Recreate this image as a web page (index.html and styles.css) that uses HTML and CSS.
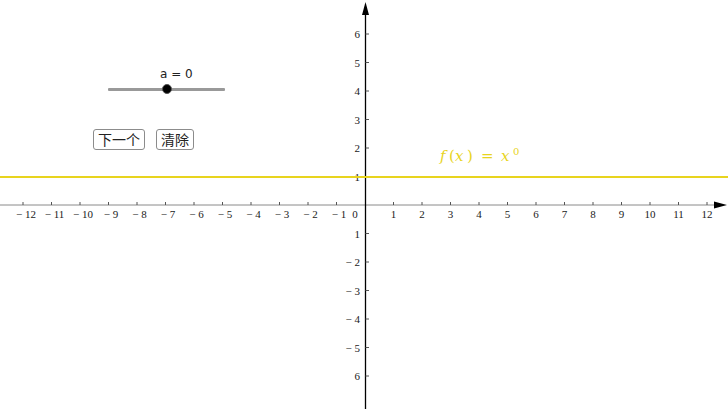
FILE: index.html
```html
<!DOCTYPE html>
<html>
<head>
<meta charset="utf-8">
<link rel="stylesheet" href="styles.css">
</head>
<body>
<div class="stage">
  <svg class="graph" width="728" height="409" viewBox="0 0 728 409" xmlns="http://www.w3.org/2000/svg">
    <!-- x axis -->
    <line class="xaxis" x1="0" y1="205" x2="716" y2="205"/>
    <polygon class="arrow" points="727,205 714,201.5 714,208.5"/>
    <!-- y axis -->
    <line class="yaxis" x1="365.5" y1="409" x2="365.5" y2="12"/>
    <polygon class="arrow" points="365.5,2 362,15 369,15"/>
    <!-- x ticks -->
    <g class="ticks">
      <line x1="23" y1="202" x2="23" y2="205"/>
      <line x1="51.5" y1="202" x2="51.5" y2="205"/>
      <line x1="80" y1="202" x2="80" y2="205"/>
      <line x1="108.5" y1="202" x2="108.5" y2="205"/>
      <line x1="137" y1="202" x2="137" y2="205"/>
      <line x1="165.5" y1="202" x2="165.5" y2="205"/>
      <line x1="194" y1="202" x2="194" y2="205"/>
      <line x1="222.5" y1="202" x2="222.5" y2="205"/>
      <line x1="251" y1="202" x2="251" y2="205"/>
      <line x1="279.5" y1="202" x2="279.5" y2="205"/>
      <line x1="308" y1="202" x2="308" y2="205"/>
      <line x1="336.5" y1="202" x2="336.5" y2="205"/>
      <line x1="393.5" y1="202" x2="393.5" y2="205"/>
      <line x1="422" y1="202" x2="422" y2="205"/>
      <line x1="450.5" y1="202" x2="450.5" y2="205"/>
      <line x1="479" y1="202" x2="479" y2="205"/>
      <line x1="507.5" y1="202" x2="507.5" y2="205"/>
      <line x1="536" y1="202" x2="536" y2="205"/>
      <line x1="564.5" y1="202" x2="564.5" y2="205"/>
      <line x1="593" y1="202" x2="593" y2="205"/>
      <line x1="621.5" y1="202" x2="621.5" y2="205"/>
      <line x1="650" y1="202" x2="650" y2="205"/>
      <line x1="678.5" y1="202" x2="678.5" y2="205"/>
      <line x1="707" y1="202" x2="707" y2="205"/>
      <!-- y ticks -->
      <line x1="365.5" y1="34" x2="369" y2="34"/>
      <line x1="365.5" y1="62.5" x2="369" y2="62.5"/>
      <line x1="365.5" y1="91" x2="369" y2="91"/>
      <line x1="365.5" y1="119.5" x2="369" y2="119.5"/>
      <line x1="365.5" y1="148" x2="369" y2="148"/>
      <line x1="365.5" y1="176.5" x2="369" y2="176.5"/>
      <line x1="365.5" y1="233.5" x2="369" y2="233.5"/>
      <line x1="365.5" y1="262" x2="369" y2="262"/>
      <line x1="365.5" y1="290.5" x2="369" y2="290.5"/>
      <line x1="365.5" y1="319" x2="369" y2="319"/>
      <line x1="365.5" y1="347.5" x2="369" y2="347.5"/>
      <line x1="365.5" y1="376" x2="369" y2="376"/>
    </g>
    <!-- x labels -->
    <g class="xlabels">
      <text x="26" y="218">− 12</text>
      <text x="54.5" y="218">− 11</text>
      <text x="83" y="218">− 10</text>
      <text x="111" y="218">− 9</text>
      <text x="139.5" y="218">− 8</text>
      <text x="168" y="218">− 7</text>
      <text x="196.5" y="218">− 6</text>
      <text x="225" y="218">− 5</text>
      <text x="253.5" y="218">− 4</text>
      <text x="282" y="218">− 3</text>
      <text x="310.5" y="218">− 2</text>
      <text x="339" y="218">− 1</text>
      <text x="355" y="218">0</text>
      <text x="393.5" y="218">1</text>
      <text x="422" y="218">2</text>
      <text x="450.5" y="218">3</text>
      <text x="479" y="218">4</text>
      <text x="507.5" y="218">5</text>
      <text x="536" y="218">6</text>
      <text x="564.5" y="218">7</text>
      <text x="593" y="218">8</text>
      <text x="621.5" y="218">9</text>
      <text x="650" y="218">10</text>
      <text x="678.5" y="218">11</text>
      <text x="707" y="218">12</text>
    </g>
    <!-- y labels -->
    <g class="ylabels">
      <text x="360" y="38">6</text>
      <text x="360" y="66.5">5</text>
      <text x="360" y="95">4</text>
      <text x="360" y="123.5">3</text>
      <text x="360" y="152">2</text>
      <text x="360" y="180.5">1</text>
      <text x="360" y="237.5">1</text>
      <text x="360" y="266">− 2</text>
      <text x="360" y="294.5">− 3</text>
      <text x="360" y="323">− 4</text>
      <text x="360" y="351.5">− 5</text>
      <text x="360" y="380">6</text>
    </g>
    <!-- function -->
    <line class="fline" x1="0" y1="177" x2="728" y2="177"/>
    <g class="flabel">
      <text class="it" x="440" y="161">f</text>
      <text x="449" y="161">(</text>
      <text class="it" x="455" y="161">x</text>
      <text x="467" y="161">)</text>
      <text x="481" y="161">=</text>
      <text class="it" x="501" y="161">x</text>
      <text class="sup" x="513" y="155">0</text>
    </g>
  </svg>

  <div class="slider">
    <div class="slider-label">a = 0</div>
    <div class="slider-track"></div>
    <div class="slider-knob"></div>
  </div>

  <div class="buttons">
    <button class="btn">下一个</button>
    <button class="btn">清除</button>
  </div>
</div>
</body>
</html>
```

FILE: styles.css
```css
html, body {
  margin: 0;
  padding: 0;
  background: #ffffff;
}

.stage {
  position: relative;
  width: 728px;
  height: 409px;
  overflow: hidden;
  background: #ffffff;
}

.graph {
  display: block;
}

.xaxis {
  stroke: #8a8a8a;
  stroke-width: 1;
}

.yaxis {
  stroke: #000000;
  stroke-width: 1.3;
}

.arrow {
  fill: #000000;
}

.ticks line {
  stroke: #555555;
  stroke-width: 1;
}

.xlabels text {
  font-family: "Liberation Serif", "DejaVu Serif", serif;
  font-size: 11px;
  fill: #1a1a1a;
  text-anchor: middle;
}

.ylabels text {
  font-family: "Liberation Serif", "DejaVu Serif", serif;
  font-size: 11px;
  fill: #1a1a1a;
  text-anchor: end;
}

.fline {
  stroke: #e8d41e;
  stroke-width: 2;
}

.flabel text {
  font-family: "DejaVu Serif", "Liberation Serif", serif;
  font-size: 15px;
  fill: #e8d41e;
}

.flabel .it {
  font-style: italic;
}

.flabel .sup {
  font-size: 10px;
}

.slider {
  position: absolute;
  left: 108px;
  top: 66px;
  width: 118px;
  height: 28px;
}

.slider-label {
  position: absolute;
  left: 52px;
  top: 0;
  font-family: "DejaVu Sans", "Liberation Sans", sans-serif;
  font-size: 12px;
  line-height: 16px;
  color: #222222;
}

.slider-track {
  position: absolute;
  left: 0;
  top: 22px;
  width: 117px;
  height: 3px;
  background: #999999;
  border-radius: 1px;
}

.slider-knob {
  position: absolute;
  left: 54px;
  top: 18px;
  width: 8px;
  height: 8px;
  border-radius: 50%;
  background: #000000;
  border: 1px solid #555555;
}

.buttons {
  position: absolute;
  left: 93px;
  top: 129px;
  display: flex;
  gap: 11px;
}

.btn {
  margin: 0;
  padding: 0 4px;
  height: 21px;
  background: #ffffff;
  border: 1px solid #8c8c8c;
  border-radius: 3px;
  font-family: "Noto Sans CJK SC", "Liberation Sans", sans-serif;
  font-size: 14px;
  line-height: 19px;
  color: #222222;
}
```
